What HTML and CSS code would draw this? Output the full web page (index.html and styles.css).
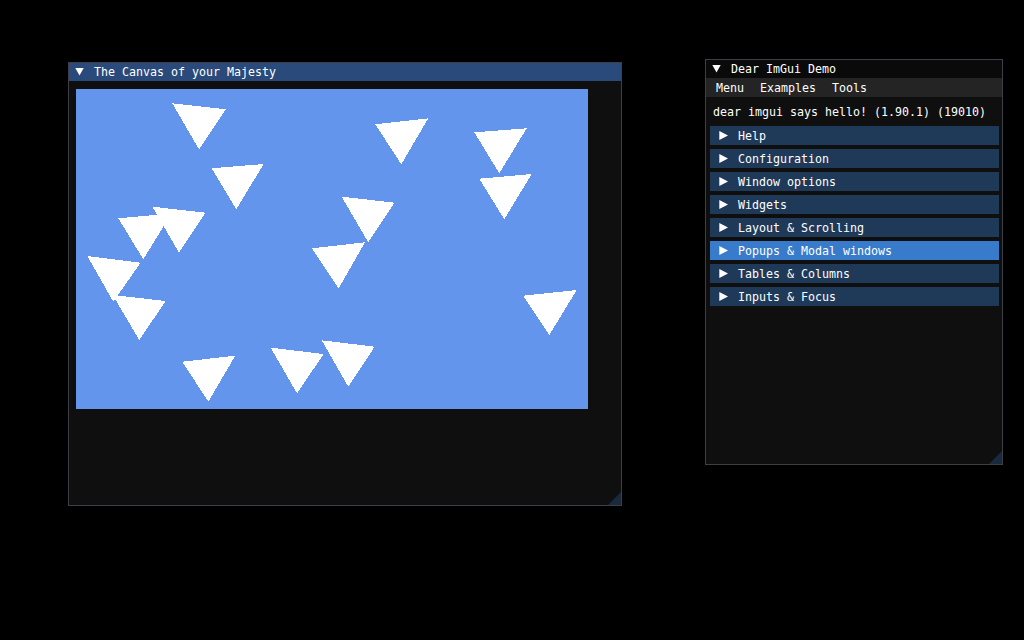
FILE: index.html
```html
<!DOCTYPE html>
<html>
<head>
<meta charset="utf-8">
<link rel="stylesheet" href="styles.css">
</head>
<body>
<div class="win canvas-win">
  <div class="title active">
    <svg class="tarrow" width="9" height="13" viewBox="0 0 9 13"><polygon points="0.3,3 8.7,3 4.5,10.5" fill="#fff"/></svg>
    <span class="ttext">The Canvas of your Majesty</span>
  </div>
  <div class="body">
    <svg class="canvas" width="512" height="320" viewBox="76 89 512 320" shape-rendering="crispEdges">
      <rect x="76" y="89" width="512" height="320" fill="#6495ed"/>
      <g fill="#fff">
        <polygon points="172.3,103.3 225.7,109.3 199,149.3"/>
        <polygon points="211.7,168.3 263.7,164 236.3,209.3"/>
        <polygon points="152.3,206.7 205.7,212.7 179,252.7"/>
        <polygon points="118.3,218.3 171.5,213.5 143.3,259.3"/>
        <polygon points="87.3,256 140.7,262.7 113.3,301.7"/>
        <polygon points="112.7,295 165.7,301 139.3,340"/>
        <polygon points="182.3,361.7 235.3,355.7 208.3,401.7"/>
        <polygon points="270.7,347.7 323.7,354 297,393.3"/>
        <polygon points="321.7,340.3 374.7,346.7 348.3,386.7"/>
        <polygon points="375.3,124.3 428.3,118.3 401.3,164.3"/>
        <polygon points="474.3,132.3 526.7,128.3 499.3,173.3"/>
        <polygon points="479.3,178.7 531.7,174 504.3,219.3"/>
        <polygon points="341.7,196.7 394.7,202.7 368.3,242.3"/>
        <polygon points="312,248.3 365,242.3 338.7,288.3"/>
        <polygon points="523.3,295.7 576.7,290 549.3,335"/>
      </g>
    </svg>
  </div>
  <div class="grip"></div>
</div>

<div class="win demo-win">
  <div class="title">
    <svg class="tarrow" width="9" height="13" viewBox="0 0 9 13"><polygon points="0.3,3 8.7,3 4.5,10.5" fill="#fff"/></svg>
    <span class="ttext">Dear ImGui Demo</span>
  </div>
  <div class="menubar">
    <span class="mitem">Menu</span>
    <span class="mitem">Examples</span>
    <span class="mitem">Tools</span>
  </div>
  <div class="demo-body">
    <div class="hello">dear imgui says hello! (1.90.1) (19010)</div>
    <div class="headers">
      <div class="hdr"><svg class="harrow" width="9" height="13" viewBox="0 0 9 13"><polygon points="0.3,2 9,6.5 0.3,11" fill="#fff"/></svg><span class="htext">Help</span></div>
      <div class="hdr"><svg class="harrow" width="9" height="13" viewBox="0 0 9 13"><polygon points="0.3,2 9,6.5 0.3,11" fill="#fff"/></svg><span class="htext">Configuration</span></div>
      <div class="hdr"><svg class="harrow" width="9" height="13" viewBox="0 0 9 13"><polygon points="0.3,2 9,6.5 0.3,11" fill="#fff"/></svg><span class="htext">Window options</span></div>
      <div class="hdr"><svg class="harrow" width="9" height="13" viewBox="0 0 9 13"><polygon points="0.3,2 9,6.5 0.3,11" fill="#fff"/></svg><span class="htext">Widgets</span></div>
      <div class="hdr"><svg class="harrow" width="9" height="13" viewBox="0 0 9 13"><polygon points="0.3,2 9,6.5 0.3,11" fill="#fff"/></svg><span class="htext">Layout &amp; Scrolling</span></div>
      <div class="hdr hovered"><svg class="harrow" width="9" height="13" viewBox="0 0 9 13"><polygon points="0.3,2 9,6.5 0.3,11" fill="#fff"/></svg><span class="htext">Popups &amp; Modal windows</span></div>
      <div class="hdr"><svg class="harrow" width="9" height="13" viewBox="0 0 9 13"><polygon points="0.3,2 9,6.5 0.3,11" fill="#fff"/></svg><span class="htext">Tables &amp; Columns</span></div>
      <div class="hdr"><svg class="harrow" width="9" height="13" viewBox="0 0 9 13"><polygon points="0.3,2 9,6.5 0.3,11" fill="#fff"/></svg><span class="htext">Inputs &amp; Focus</span></div>
    </div>
  </div>
  <div class="grip"></div>
</div>
</body>
</html>
```

FILE: styles.css
```css
html, body {
  margin: 0;
  padding: 0;
  background: #000;
}
body {
  width: 1024px;
  height: 640px;
  overflow: hidden;
  position: relative;
  font-family: "DejaVu Sans Mono", "Liberation Mono", monospace;
  font-size: 11.63px;
  line-height: 13px;
  color: #fff;
}
.win {
  position: absolute;
  box-sizing: border-box;
  border: 1px solid #3e3e47;
  background: #0f0f0f;
  display: flex;
  flex-direction: column;
}
.canvas-win {
  left: 68px;
  top: 62px;
  width: 554px;
  height: 444px;
}
.demo-win {
  left: 705px;
  top: 59px;
  width: 298px;
  height: 406px;
}
.title {
  height: 18px;
  box-sizing: border-box;
  padding: 2px 0 0 6px;
  background: #0a0a0a;
  display: flex;
  align-items: flex-start;
  white-space: pre;
}
.title.active {
  background: #294a7a;
}
.tarrow {
  display: block;
  flex: none;
  margin-right: 10px;
}
.ttext {
  display: block;
  padding-top: 1px;
}
.body {
  padding: 8px 0 0 7px;
}
.canvas {
  display: block;
}
.menubar {
  height: 19px;
  box-sizing: border-box;
  padding: 4px 0 0 10px;
  background: #242424;
  display: flex;
  white-space: pre;
}
.mitem {
  margin-right: 16px;
}
.demo-body {
  padding: 9px 3px 0 4px;
}
.hello {
  padding-left: 3px;
  margin-bottom: 7px;
  white-space: pre;
}
.headers {
  display: flex;
  flex-direction: column;
  gap: 4px;
}
.hdr {
  height: 19px;
  box-sizing: border-box;
  padding: 3px 0 0 9px;
  background: #1f3958;
  display: flex;
  align-items: flex-start;
  white-space: pre;
}
.hdr.hovered {
  background: #387bcb;
}
.harrow {
  display: block;
  flex: none;
  margin-right: 10px;
}
.htext {
  display: block;
  padding-top: 1px;
}
.grip {
  position: absolute;
  right: 0;
  bottom: 0;
  width: 13px;
  height: 13px;
  background: #192a3e;
  clip-path: polygon(100% 0, 100% 100%, 0 100%);
}
```
